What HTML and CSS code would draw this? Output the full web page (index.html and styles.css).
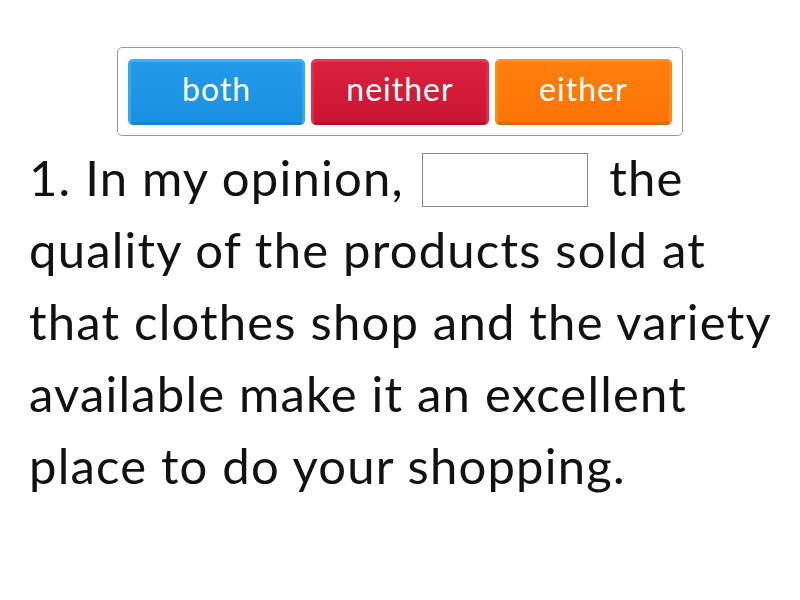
FILE: index.html
```html
<!DOCTYPE html>
<html>
<head>
<meta charset="utf-8">
<link rel="stylesheet" href="styles.css">
</head>
<body>
<div class="page">
  <div class="bank">
    <div class="tile tile-blue">both</div>
    <div class="tile tile-red">neither</div>
    <div class="tile tile-orange">either</div>
  </div>
  <p class="question">1. In my opinion, <span class="blank"></span> the quality of the products sold at that clothes shop and the variety available make it an excellent place to do your shopping.</p>
</div>
</body>
</html>
```
FILE: styles.css
```css
html, body {
  margin: 0;
  padding: 0;
  background: #ffffff;
}
body {
  font-family: Lato, "Noto Sans", sans-serif;
  color: #111111;
}
.page {
  width: 800px;
  height: 600px;
  display: flex;
  flex-direction: column;
  align-items: center;
}
.bank {
  margin-top: 47px;
  width: 566px;
  box-sizing: border-box;
  border: 1px solid #9a9a9a;
  border-radius: 5px;
  padding: 11px 10px 10px 10px;
  display: flex;
  gap: 6px;
}
.tile {
  flex: 1;
  height: 66px;
  box-sizing: border-box;
  border-radius: 5px;
  border: 3px solid;
  display: flex;
  align-items: center;
  justify-content: center;
  color: #ffffff;
  font-size: 32px;
  letter-spacing: 1px;
  padding-bottom: 7px;
}
.tile-blue {
  background: linear-gradient(#229be9, #1a90e2);
  border-color: #3eb0f6 #35a6f0 #1385d2 #35a6f0;
}
.tile-red {
  background: linear-gradient(#d8213d, #cc1533);
  border-color: #ea3651 #e32d48 #b90c28 #e32d48;
}
.tile-orange {
  background: linear-gradient(#ff7e0c, #fb7505);
  border-color: #ff9226 #ff8818 #e36700 #ff8818;
}
.question {
  margin: 0;
  width: 750px;
  padding-left: 4px;
  box-sizing: border-box;
  font-size: 49px;
  letter-spacing: 1.2px;
  line-height: 72px;
  padding-top: 5px;
}
.blank {
  display: inline-block;
  width: 166px;
  height: 54px;
  box-sizing: border-box;
  border: 1px solid #888888;
  vertical-align: -11px;
  margin: 0 8px 0 4px;
}
```
